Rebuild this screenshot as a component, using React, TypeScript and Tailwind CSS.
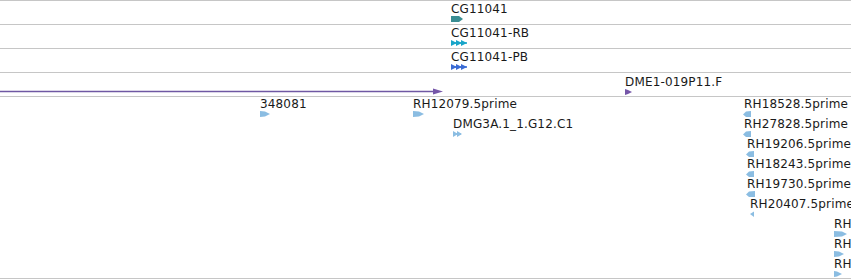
import React from "react";

type Glyph = "teal" | "triCyan" | "triBlue" | "purple" | "right" | "left" | "leftSmall" | "double";

function GlyphSvg({ kind, w }: { kind: Glyph; w: number }) {
  if (kind === "teal")
    return (
      <svg width={13} height={6} className="block">
        <polygon points="0,0 8,0 12,3 8,6 0,6" fill="#3a8e93" />
      </svg>
    );
  if (kind === "triCyan" || kind === "triBlue") {
    const c = kind === "triCyan" ? "#19a5c9" : "#3a6bd4";
    return (
      <svg width={17} height={6} className="block">
        <line x1={0} y1={3} x2={16} y2={3} stroke={c} strokeWidth={1.5} />
        <polygon points="0,0 6,3 0,6" fill={c} />
        <polygon points="5,0 11,3 5,6" fill={c} />
        <polygon points="10,0 16,3 10,6" fill={c} />
      </svg>
    );
  }
  if (kind === "purple")
    return (
      <svg width={8} height={6} className="block">
        <polygon points="0,0 3,1 7,3 3,5 0,6" fill="#7556a8" />
      </svg>
    );
  if (kind === "double")
    return (
      <svg width={9} height={6} className="block">
        <line x1={0} y1={3} x2={8} y2={3} stroke="#8bbde2" strokeWidth={1.5} />
        <polygon points="0,0 5,3 0,6" fill="#8bbde2" />
        <polygon points="4,0 9,3 4,6" fill="#8bbde2" />
      </svg>
    );
  if (kind === "left")
    return (
      <svg width={w} height={6} className="block">
        <polygon points={`0,3.5 3,0.5 ${w},0 ${w},6 3,6`} fill="#8bbde2" />
      </svg>
    );
  if (kind === "leftSmall")
    return (
      <svg width={5} height={6} className="block">
        <polygon points="0,3 4,0.5 4,6" fill="#8bbde2" />
      </svg>
    );
  return (
    <svg width={w} height={6} className="block">
      <polygon points={`0,0 ${w - 5},0.5 ${w},3 ${w - 5},5.5 0,6`} fill="#8bbde2" />
    </svg>
  );
}

// a feature sits at its genomic position on the track canvas
function Feature({
  x,
  y,
  label,
  glyph,
  gx = 0,
  w = 10,
}: {
  x: number;
  y: number;
  label: string;
  glyph: Glyph;
  gx?: number;
  w?: number;
}) {
  return (
    <div className="absolute flex flex-col gap-px" style={{ left: x, top: y }}>
      <div className="text-[12px] leading-[12px] tracking-[0.15px] text-[#1a1a1a] whitespace-nowrap">
        {label}
      </div>
      <div style={{ marginLeft: gx }}>
        <GlyphSvg kind={glyph} w={w} />
      </div>
    </div>
  );
}

const bottom: { x: number; y: number; label: string; glyph: Glyph; gx?: number; w?: number }[] = [
  { x: 260, y: 1, label: "348081", glyph: "right", w: 10 },
  { x: 413, y: 1, label: "RH12079.5prime", glyph: "right", w: 11 },
  { x: 744, y: 1, label: "RH18528.5prime", glyph: "left", gx: -1, w: 8 },
  { x: 453, y: 21, label: "DMG3A.1_1.G12.C1", glyph: "double" },
  { x: 744, y: 21, label: "RH27828.5prime", glyph: "left", gx: -1, w: 8 },
  { x: 747, y: 41, label: "RH19206.5prime", glyph: "left", gx: -1, w: 8 },
  { x: 747, y: 61, label: "RH18243.5prime", glyph: "left", gx: -1, w: 8 },
  { x: 747, y: 81, label: "RH19730.5prime", glyph: "left", gx: -1, w: 9 },
  { x: 750, y: 101, label: "RH20407.5prime", glyph: "leftSmall" },
  { x: 834, y: 121, label: "RH", glyph: "right", w: 13 },
  { x: 834, y: 141, label: "RH", glyph: "right", w: 10 },
  { x: 834, y: 161, label: "RH", glyph: "right", w: 8 },
];

export default function App() {
  return (
    <div
      className="w-[851px] h-[280px] bg-white overflow-hidden flex flex-col"
      style={{ fontFamily: '"DejaVu Sans", sans-serif' }}
    >
      {/* gene tracks */}
      <div className="relative h-6 shrink-0 border-t border-[#c6c6c6]">
        <Feature x={451} y={2} label="CG11041" glyph="teal" />
      </div>
      <div className="relative h-6 shrink-0 border-t border-[#c6c6c6]">
        <Feature x={451} y={2} label="CG11041-RB" glyph="triCyan" />
      </div>
      <div className="relative h-6 shrink-0 border-t border-[#c6c6c6]">
        <Feature x={451} y={2} label="CG11041-PB" glyph="triBlue" />
      </div>
      <div className="relative h-6 shrink-0 border-t border-[#c6c6c6]">
        <svg width={445} height={7} className="absolute left-0 top-[15px]">
          <line x1={0} y1={3.5} x2={435} y2={3.5} stroke="#6f58a3" strokeWidth={1.3} />
          <polygon points="433,0.5 443,3.5 433,6.5" fill="#7556a8" />
        </svg>
        <Feature x={625} y={3} label="DME1-019P11.F" glyph="purple" />
      </div>

      {/* ESTs */}
      <div className="relative h-[183px] shrink-0 border-y border-[#c6c6c6]">
        {bottom.map((f, i) => (
          <Feature key={i} {...f} />
        ))}
      </div>
    </div>
  );
}
